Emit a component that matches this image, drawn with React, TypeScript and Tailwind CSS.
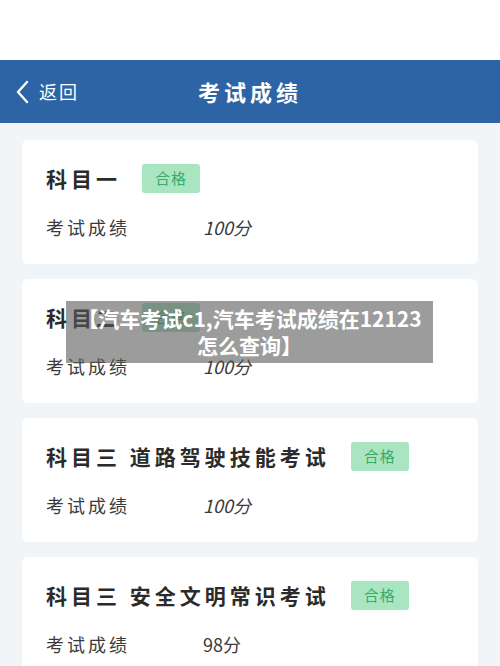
const cjk = '"Noto Sans CJK SC", "Noto Sans", sans-serif';

type Item = { title: string; score: string; italic?: boolean };

const items: Item[] = [
  { title: '科目一', score: '100分', italic: true },
  { title: '科目二', score: '100分', italic: true },
  { title: '科目三 道路驾驶技能考试', score: '100分', italic: true },
  { title: '科目三 安全文明常识考试', score: '98分' },
];

function ScoreCard({ item }: { item: Item }) {
  return (
    <div className="flex h-[124px] shrink-0 flex-col rounded-md bg-white px-6 pt-6">
      <div className="flex h-[29px] items-center gap-[21px]">
        <span className="text-[21px] font-bold tracking-[4px] text-[#2b2b2b]">{item.title}</span>
        <span className="flex h-[29px] w-[58px] items-center justify-center rounded-[3px] bg-[#a8e5c0] text-[15px] tracking-[1px] text-[#3aaa68]">
          合格
        </span>
      </div>
      <div className="mt-[21px] flex items-center text-[18px] text-[#3a3a3a]">
        <span className="w-[157px] tracking-[3px]">考试成绩</span>
        <span className={item.italic ? 'italic' : ''}>{item.score}</span>
      </div>
    </div>
  );
}

export default function App() {
  return (
    <div className="relative h-[666px] w-[500px] overflow-hidden bg-[#f2f5f8]" style={{ fontFamily: cjk }}>
      {/* status area */}
      <div className="h-[60px] bg-white" />

      {/* Header */}
      <header className="relative flex h-[63px] items-center bg-[#2d64a6] text-white">
        <div className="flex items-center gap-[8px] pl-[15px]">
          <svg width="16" height="24" viewBox="0 0 16 24" fill="none">
            <path d="M12 2 L3 12 L12 22" stroke="white" strokeWidth="2.4" strokeLinecap="round" strokeLinejoin="round" />
          </svg>
          <span className="text-[18px] tracking-[2px]">返回</span>
        </div>
        <h1 className="absolute left-1/2 -translate-x-1/2 text-[22px] font-bold tracking-[4px]">考试成绩</h1>
      </header>

      {/* Cards */}
      <main className="flex flex-col gap-[15px] px-[22px] pt-[17px]">
        {items.map((it) => (
          <ScoreCard key={it.title} item={it} />
        ))}
      </main>

      {/* Caption overlay */}
      <div className="absolute left-[66px] top-[301px] flex h-[62px] w-[367px] items-center justify-center bg-[rgba(90,90,90,0.6)]">
        <p className="whitespace-nowrap text-center text-[21px] font-bold leading-[27px] text-white">
          【汽车考试c1,汽车考试成绩在12123
          <br />
          怎么查询】
        </p>
      </div>
    </div>
  );
}
